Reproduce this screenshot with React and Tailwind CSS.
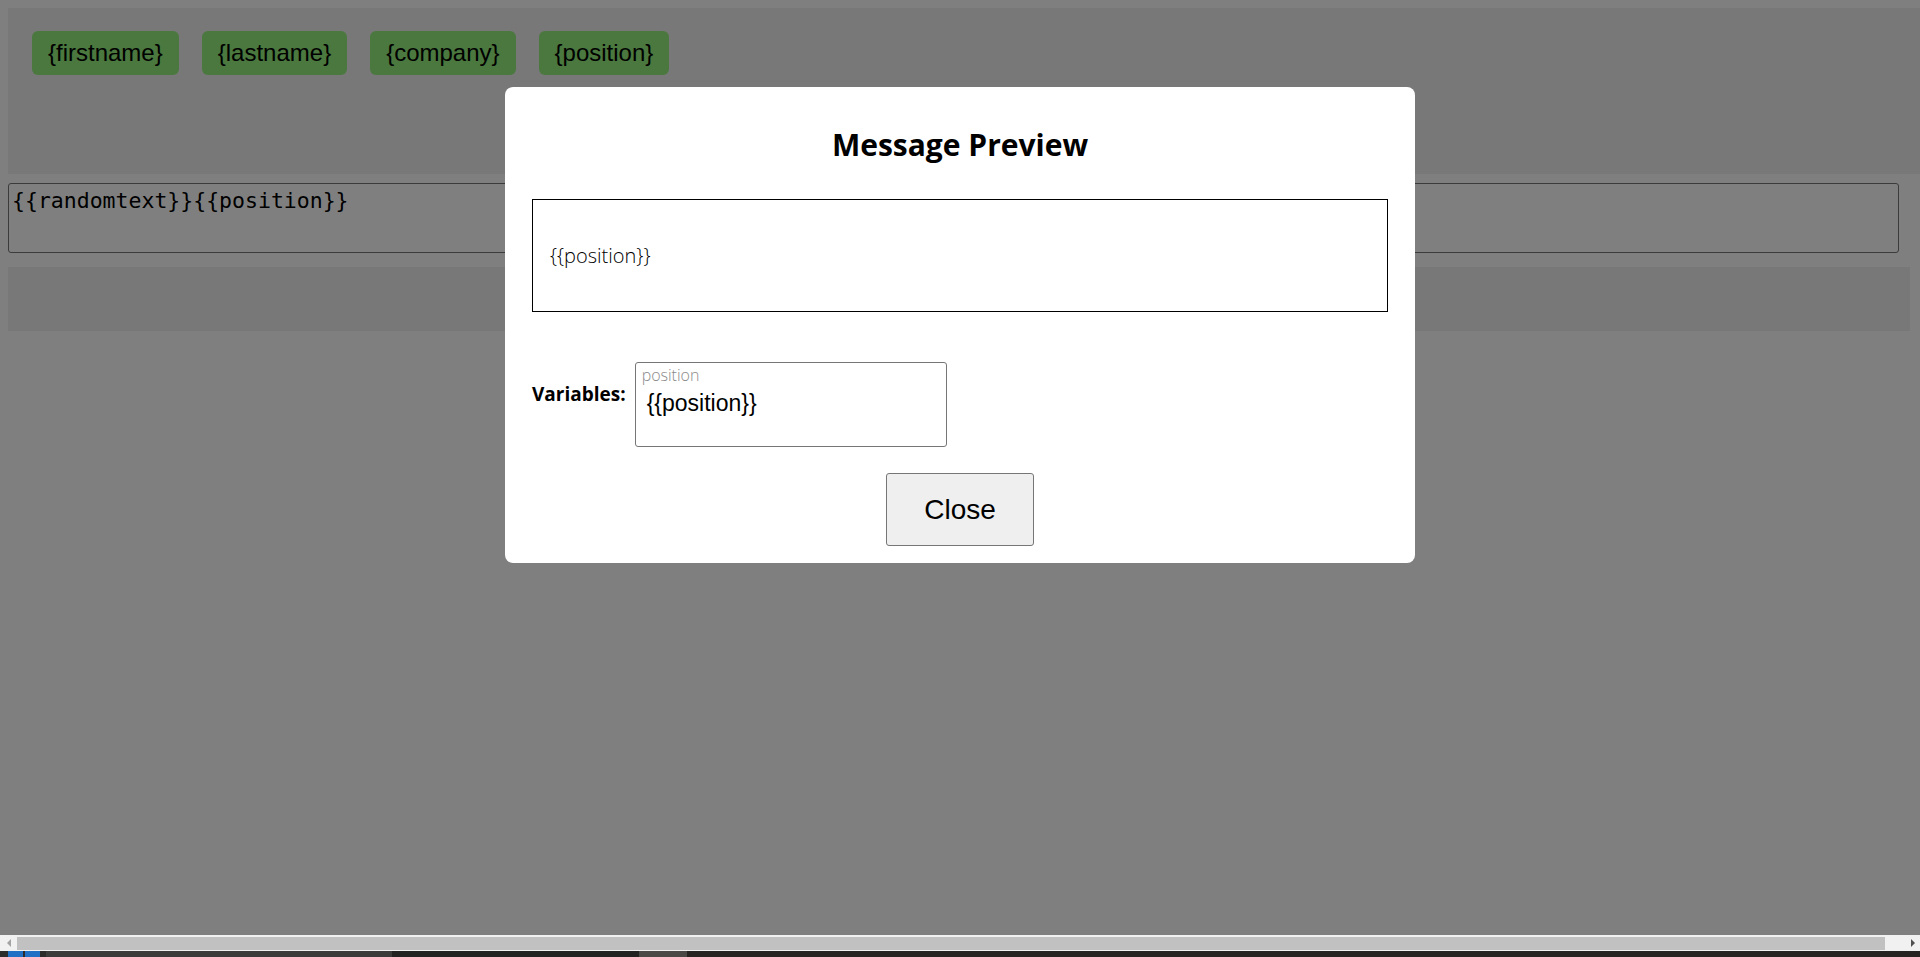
import React from "react";

const chips = ["{firstname}", "{lastname}", "{company}", "{position}"];

function TagChip({ label }) {
  return (
    <div className="rounded-md bg-[#94f07c] px-4 py-2 text-[24px] leading-[27.6px] text-black font-['Liberation_Sans',Arial,sans-serif]">
      {label}
    </div>
  );
}

function PreviewModal() {
  return (
    <div className="w-[910px] rounded-lg bg-white px-[27px] pt-[37px] pb-[17px] font-['Open_Sans',sans-serif] text-black">
      <h2 className="text-center text-[30px] font-bold leading-[41px]">Message Preview</h2>
      <div className="mt-[34px] flex h-[113px] items-center border border-black pl-[17px]">
        <p className="text-[20px] font-light text-black">{"{{position}}"}</p>
      </div>
      <div className="mt-[50px] flex items-start gap-[9px]">
        <span className="mt-[19px] text-[19px] font-bold leading-[26px]">Variables:</span>
        <div className="h-[85px] w-[312px] rounded-[3px] border border-[#767676] pt-[1px]">
          <div className="pl-[6px] text-[16px] font-light leading-[22px] text-[#8a8a8a]">position</div>
          <div className="pl-[11px] pt-[4px] text-[23px] leading-[26px] font-['Liberation_Sans',Arial,sans-serif]">
            {"{{position}}"}
          </div>
        </div>
      </div>
      <div className="mt-[26px] flex justify-center">
        <button className="h-[73px] w-[148px] rounded-[3px] border border-[#767676] bg-[#efefef] text-[28px] font-['Liberation_Sans',Arial,sans-serif]">
          Close
        </button>
      </div>
    </div>
  );
}

function HScrollbar() {
  return (
    <div className="flex h-[16px] items-center bg-[#f1f1f1]">
      <div className="flex w-[17px] justify-center">
        <div className="h-0 w-0 border-y-[4px] border-r-[4px] border-y-transparent border-r-[#a3a3a3]" />
      </div>
      <div className="h-[13px] w-[1868px] bg-[#c1c1c1]" />
      <div className="flex flex-1 justify-end pr-[5px]">
        <div className="h-0 w-0 border-y-[4px] border-l-[4px] border-y-transparent border-l-[#505050]" />
      </div>
    </div>
  );
}

export default function App() {
  return (
    <div className="flex h-[957px] w-[1920px] flex-col overflow-hidden bg-white">
      <div className="relative h-[935px] overflow-hidden">
        {/* page beneath the dialog */}
        <div className="flex w-[1938px] flex-col p-2">
          <div className="flex h-[166px] w-[1930px] items-start gap-[23px] bg-[#f0f0f0] pl-[24px] pt-[23px]">
            {chips.map((c) => (
              <TagChip key={c} label={c} />
            ))}
          </div>
          <div className="mt-[9px] h-[70px] w-[1891px] rounded-[3px] border border-[#767676] bg-white px-[3px] pt-[5px] text-[21.5px] leading-[24px] text-black font-['DejaVu_Sans_Mono',monospace]">
            {"{{randomtext}}{{position}}"}
          </div>
          <div className="mt-[14px] h-[64px] w-[1902px] bg-[#f0f0f0]" />
        </div>

        {/* overlay */}
        <div className="absolute inset-0 flex items-start justify-center bg-[rgba(0,0,0,0.5)] pt-[87px]">
          <PreviewModal />
        </div>
      </div>
      <HScrollbar />
      <div className="flex h-[6px] bg-[#262320]">
        <div className="flex w-[46px] gap-[2px] bg-[#2b2b2b] pl-[8px]">
          <div className="h-full w-[15px] bg-[#1f6fc4]" />
          <div className="h-full w-[15px] bg-[#1f6fc4]" />
        </div>
        <div className="w-[346px] bg-[#3b3b3b]" />
        <div className="w-[247px] bg-[#222222]" />
        <div className="w-[48px] bg-[#4a4946]" />
      </div>
    </div>
  );
}
